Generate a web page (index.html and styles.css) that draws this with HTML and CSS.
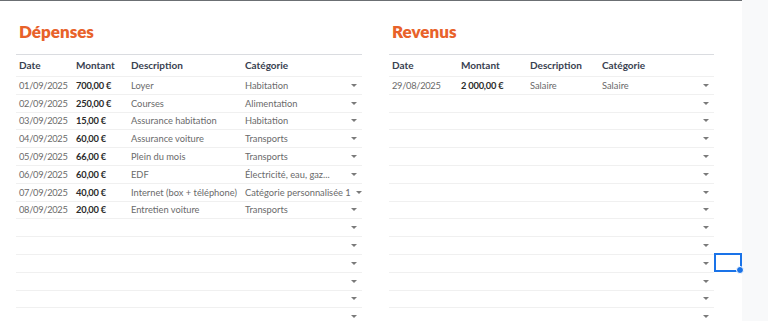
FILE: index.html
```html
<!DOCTYPE html>
<html lang="fr">
<head>
<meta charset="utf-8">
<link rel="stylesheet" href="styles.css">
</head>
<body>
<div class="app">
  <div class="sheet">
    <section class="table left">
      <h2 class="title">Dépenses</h2>
      <div class="grid">
        <div class="row head"><span>Date</span><span>Montant</span><span>Description</span><span>Catégorie</span><i></i></div>
        <div class="row"><span class="num">01/09/2025</span><b>700,00 €</b><span>Loyer</span><span class="cat">Habitation</span><i class="dd"></i></div>
        <div class="row"><span class="num">02/09/2025</span><b>250,00 €</b><span>Courses</span><span class="cat">Alimentation</span><i class="dd"></i></div>
        <div class="row"><span class="num">03/09/2025</span><b>15,00 €</b><span>Assurance habitation</span><span class="cat">Habitation</span><i class="dd"></i></div>
        <div class="row"><span class="num">04/09/2025</span><b>60,00 €</b><span>Assurance voiture</span><span class="cat">Transports</span><i class="dd"></i></div>
        <div class="row"><span class="num">05/09/2025</span><b>66,00 €</b><span>Plein du mois</span><span class="cat">Transports</span><i class="dd"></i></div>
        <div class="row"><span class="num">06/09/2025</span><b>60,00 €</b><span>EDF</span><span class="cat">Électricité, eau, gaz...</span><i class="dd"></i></div>
        <div class="row"><span class="num">07/09/2025</span><b>40,00 €</b><span>Internet (box + téléphone)</span><span class="cat">Catégorie personnalisée 1</span><i class="dd"></i></div>
        <div class="row"><span class="num">08/09/2025</span><b>20,00 €</b><span>Entretien voiture</span><span class="cat">Transports</span><i class="dd"></i></div>
        <div class="row"><span></span><b></b><span></span><span></span><i class="dd"></i></div>
        <div class="row"><span></span><b></b><span></span><span></span><i class="dd"></i></div>
        <div class="row"><span></span><b></b><span></span><span></span><i class="dd"></i></div>
        <div class="row"><span></span><b></b><span></span><span></span><i class="dd"></i></div>
        <div class="row"><span></span><b></b><span></span><span></span><i class="dd"></i></div>
        <div class="row"><span></span><b></b><span></span><span></span><i class="dd"></i></div>
        <div class="row"><span></span><b></b><span></span><span></span><i class="dd"></i></div>
      </div>
    </section>
    <section class="table right">
      <h2 class="title">Revenus</h2>
      <div class="grid">
        <div class="row head"><span>Date</span><span>Montant</span><span>Description</span><span>Catégorie</span><i></i></div>
        <div class="row"><span class="num">29/08/2025</span><b>2 000,00 €</b><span>Salaire</span><span class="cat">Salaire</span><i class="dd"></i></div>
        <div class="row"><span></span><b></b><span></span><span></span><i class="dd"></i></div>
        <div class="row"><span></span><b></b><span></span><span></span><i class="dd"></i></div>
        <div class="row"><span></span><b></b><span></span><span></span><i class="dd"></i></div>
        <div class="row"><span></span><b></b><span></span><span></span><i class="dd"></i></div>
        <div class="row"><span></span><b></b><span></span><span></span><i class="dd"></i></div>
        <div class="row"><span></span><b></b><span></span><span></span><i class="dd"></i></div>
        <div class="row"><span></span><b></b><span></span><span></span><i class="dd"></i></div>
        <div class="row"><span></span><b></b><span></span><span></span><i class="dd"></i></div>
        <div class="row"><span></span><b></b><span></span><span></span><i class="dd"></i></div>
        <div class="row"><span></span><b></b><span></span><span></span><i class="dd"></i></div>
        <div class="row"><span></span><b></b><span></span><span></span><i class="dd"></i></div>
        <div class="row"><span></span><b></b><span></span><span></span><i class="dd"></i></div>
        <div class="row"><span></span><b></b><span></span><span></span><i class="dd"></i></div>
        <div class="row"><span></span><b></b><span></span><span></span><i class="dd"></i></div>
      </div>
    </section>
    <div class="selection"><span class="handle"></span></div>
  </div>
  <aside class="sidepanel"></aside>
</div>
</body>
</html>
```

FILE: styles.css
```css
html, body {
  margin: 0;
  padding: 0;
  height: 100%;
  overflow: hidden;
}
body {
  font-family: Lato, "Open Sans", sans-serif;
  background: #ffffff;
  color: #3c4043;
}
.app {
  display: flex;
  width: 768px;
  height: 321px;
  overflow: hidden;
}
.sheet {
  position: relative;
  z-index: 1;
  width: 742px;
  height: 321px;
  border-top: 1px solid #6b6f73;
  display: flex;
  gap: 27px;
  padding-left: 16px;
  box-sizing: border-box;
}
.sidepanel {
  flex: 1;
  background: #f8f9fa;
}
.table {
  display: flex;
  flex-direction: column;
}
.left { width: 346px; }
.right { width: 325px; }
.title {
  margin: 0;
  padding: 20px 0 11px 3px;
  font-size: 17px;
  font-weight: 800;
  line-height: 22px;
  color: #e8622a;
}
.grid {
  border-top: 1px solid #dadce0;
}
.row {
  display: grid;
  height: 17.8px;
  box-sizing: border-box;
  border-bottom: 1px solid #f0f0f0;
  align-items: center;
  font-size: 9.3px;
  color: #6a6a6a;
}
.left .row { grid-template-columns: 57px 55px 114px 1fr 16px; }
.right .row { grid-template-columns: 69px 69px 72px 1fr 16px; }
.row > span, .row > b {
  padding-left: 3px;
  white-space: nowrap;
  overflow: hidden;
}
.row > .cat {
  overflow: visible;
}
.num {
  letter-spacing: -0.3px;
}
.row > b {
  font-weight: 700;
  color: #2b2b2b;
  letter-spacing: -0.2px;
}
.row.head {
  height: 22px;
  font-size: 10px;
  font-weight: 700;
  color: #394150;
  padding-bottom: 2px;
}
.dd {
  justify-self: center;
  width: 0;
  height: 0;
  border-left: 3px solid transparent;
  border-right: 3px solid transparent;
  border-top: 3px solid #7a7a7a;
}
.selection {
  position: absolute;
  left: 714px;
  top: 252px;
  width: 28px;
  height: 19px;
  border: 2px solid #1a73e8;
  box-sizing: border-box;
}
.handle {
  position: absolute;
  right: -4px;
  bottom: -4px;
  width: 6px;
  height: 6px;
  border-radius: 50%;
  background: #1a73e8;
  border: 1px solid #fff;
}
```
